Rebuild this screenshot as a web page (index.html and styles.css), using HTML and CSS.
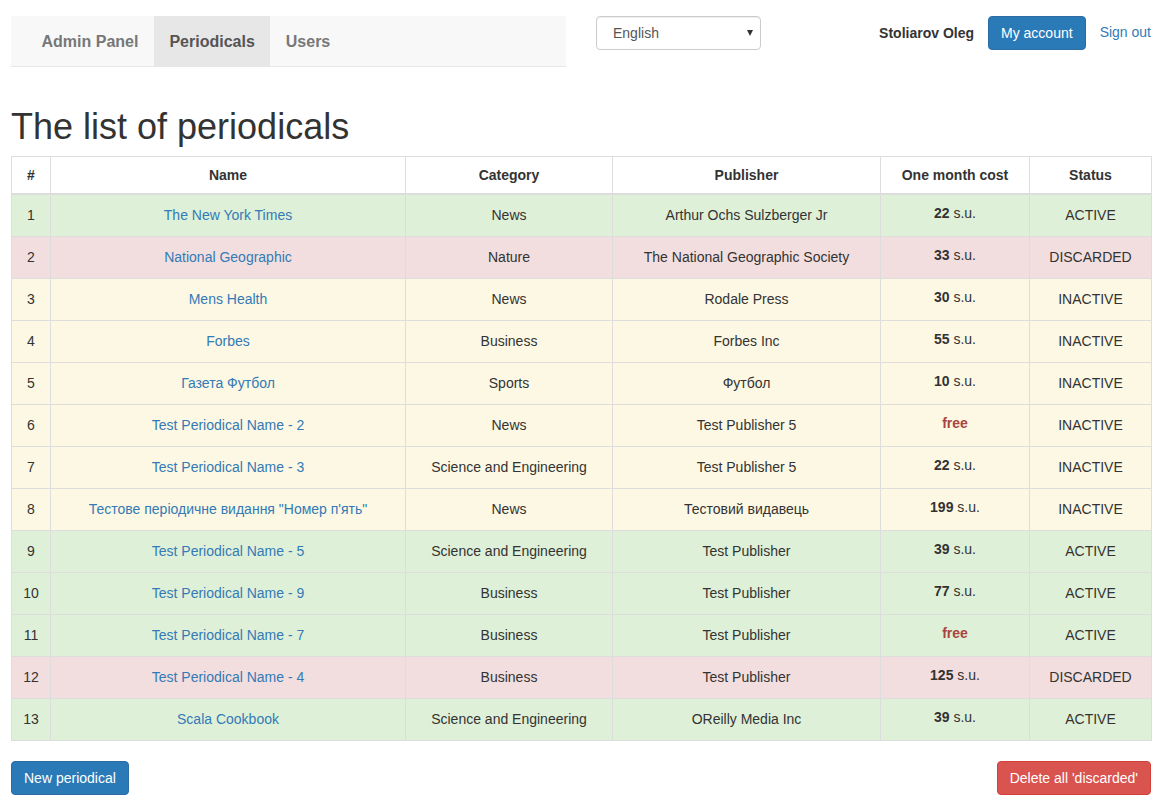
FILE: index.html
```html
<!DOCTYPE html>
<html lang="en">
<head>
<meta charset="utf-8">
<title>The list of periodicals</title>
<link rel="stylesheet" href="styles.css">
</head>
<body>
<header class="topbar">
  <nav class="navbar">
    <ul class="nav">
      <li><a href="#">Admin Panel</a></li>
      <li class="active"><a href="#">Periodicals</a></li>
      <li><a href="#">Users</a></li>
    </ul>
  </nav>
  <div class="lang-select"><span>English</span><span class="caret"></span></div>
  <div class="user">
    <span class="user-name">Stoliarov Oleg</span>
    <a class="btn btn-primary" href="#">My account</a>
    <a class="link" href="#">Sign out</a>
  </div>
</header>

<h1 class="title">The list of periodicals</h1>

<table class="table">
  <colgroup>
    <col class="c-num"><col class="c-name"><col class="c-cat"><col class="c-pub"><col class="c-cost"><col class="c-status">
  </colgroup>
  <thead>
    <tr><th>#</th><th>Name</th><th>Category</th><th>Publisher</th><th>One month cost</th><th>Status</th></tr>
  </thead>
  <tbody>
    <tr class="success"><td>1</td><td><a href="#">The New York Times</a></td><td>News</td><td>Arthur Ochs Sulzberger Jr</td><td class="cost"><b>22</b> s.u.</td><td>ACTIVE</td></tr>
    <tr class="danger"><td>2</td><td><a href="#">National Geographic</a></td><td>Nature</td><td>The National Geographic Society</td><td class="cost"><b>33</b> s.u.</td><td>DISCARDED</td></tr>
    <tr class="warning"><td>3</td><td><a href="#">Mens Health</a></td><td>News</td><td>Rodale Press</td><td class="cost"><b>30</b> s.u.</td><td>INACTIVE</td></tr>
    <tr class="warning"><td>4</td><td><a href="#">Forbes</a></td><td>Business</td><td>Forbes Inc</td><td class="cost"><b>55</b> s.u.</td><td>INACTIVE</td></tr>
    <tr class="warning"><td>5</td><td><a href="#">Газета Футбол</a></td><td>Sports</td><td>Футбол</td><td class="cost"><b>10</b> s.u.</td><td>INACTIVE</td></tr>
    <tr class="warning"><td>6</td><td><a href="#">Test Periodical Name - 2</a></td><td>News</td><td>Test Publisher 5</td><td class="cost"><b class="free">free</b></td><td>INACTIVE</td></tr>
    <tr class="warning"><td>7</td><td><a href="#">Test Periodical Name - 3</a></td><td>Science and Engineering</td><td>Test Publisher 5</td><td class="cost"><b>22</b> s.u.</td><td>INACTIVE</td></tr>
    <tr class="warning"><td>8</td><td><a href="#">Тестове періодичне видання "Номер п'ять"</a></td><td>News</td><td>Тестовий видавець</td><td class="cost"><b>199</b> s.u.</td><td>INACTIVE</td></tr>
    <tr class="success"><td>9</td><td><a href="#">Test Periodical Name - 5</a></td><td>Science and Engineering</td><td>Test Publisher</td><td class="cost"><b>39</b> s.u.</td><td>ACTIVE</td></tr>
    <tr class="success"><td>10</td><td><a href="#">Test Periodical Name - 9</a></td><td>Business</td><td>Test Publisher</td><td class="cost"><b>77</b> s.u.</td><td>ACTIVE</td></tr>
    <tr class="success"><td>11</td><td><a href="#">Test Periodical Name - 7</a></td><td>Business</td><td>Test Publisher</td><td class="cost"><b class="free">free</b></td><td>ACTIVE</td></tr>
    <tr class="danger"><td>12</td><td><a href="#">Test Periodical Name - 4</a></td><td>Business</td><td>Test Publisher</td><td class="cost"><b>125</b> s.u.</td><td>DISCARDED</td></tr>
    <tr class="success"><td>13</td><td><a href="#">Scala Cookbook</a></td><td>Science and Engineering</td><td>OReilly Media Inc</td><td class="cost"><b>39</b> s.u.</td><td>ACTIVE</td></tr>
  </tbody>
</table>

<div class="actions">
  <a class="btn btn-primary" href="#">New periodical</a>
  <a class="btn btn-danger" href="#">Delete all 'discarded'</a>
</div>
</body>
</html>
```

FILE: styles.css
```css
* { box-sizing: border-box; }

html, body { margin: 0; }

body {
  padding: 16px 14px 0 11px;
  font-family: "Liberation Sans", Arial, Helvetica, sans-serif;
  font-size: 14px;
  line-height: 20px;
  color: #333;
  background: #fff;
}

a { color: #337ab7; text-decoration: none; }

/* top bar */
.topbar {
  display: flex;
  align-items: flex-start;
}

.navbar {
  width: 555px;
  height: 51px;
  background: #f8f8f8;
  border-bottom: 1px solid #e7e7e7;
  flex: none;
}

.nav {
  list-style: none;
  margin: 0;
  padding: 0 0 0 15px;
  display: flex;
}

.nav a {
  display: block;
  padding: 16px 15.5px 14px;
  line-height: 20px;
  font-size: 16px;
  font-weight: bold;
  color: #777;
}

.nav .active a {
  background: #e7e7e7;
  color: #555;
}

.lang-select {
  margin-left: 30px;
  width: 165px;
  height: 34px;
  border: 1px solid #ccc;
  border-radius: 4px;
  padding: 6px 6px 6px 16px;
  display: flex;
  align-items: center;
  justify-content: space-between;
  color: #555;
  background: #fff;
  box-shadow: inset 0 1px 1px rgba(0,0,0,.075);
  flex: none;
}

.caret {
  width: 0;
  height: 0;
  border-left: 3.5px solid transparent;
  border-right: 3.5px solid transparent;
  border-top: 6px solid #333;
  margin-right: 1px;
}

.user {
  margin-left: auto;
  display: flex;
  align-items: center;
  gap: 14px;
  height: 34px;
}

.user-name { font-weight: bold; }

.link { margin-top: -2px; }

.btn {
  display: inline-block;
  padding: 6px 12px;
  font-size: 14px;
  line-height: 20px;
  border: 1px solid transparent;
  border-radius: 4px;
  color: #fff;
  white-space: nowrap;
}

.btn-primary {
  background: #2a7ab8;
  border-color: #2e6da4;
}

.btn-danger {
  background: #d9534f;
  border-color: #d43f3a;
}

/* heading */
.title {
  margin: 40px 0 9px;
  font-size: 36px;
  line-height: 40px;
  font-weight: normal;
  color: #333;
}

/* table */
.table {
  width: 1140px;
  border-collapse: collapse;
  table-layout: fixed;
  border: 1px solid #ddd;
}

.c-num { width: 39px; }
.c-name { width: 355px; }
.c-cat { width: 207px; }
.c-pub { width: 268px; }
.c-cost { width: 149px; }
.c-status { width: 122px; }

.table th,
.table td {
  border: 1px solid #ddd;
  text-align: center;
  vertical-align: middle;
  line-height: 20px;
}

.table th {
  padding: 8px;
  font-weight: bold;
  border-bottom: 2px solid #ddd;
}

.table td {
  padding: 10px 8px 11px;
}

.table td.cost {
  padding: 8px 8px 13px;
}

.free { color: #a94442; }

.success td { background: #dff0d8; }
.danger td { background: #f2dede; }
.warning td { background: #fcf8e3; }

/* bottom actions */
.actions {
  margin-top: 20px;
  display: flex;
  justify-content: space-between;
}
```
